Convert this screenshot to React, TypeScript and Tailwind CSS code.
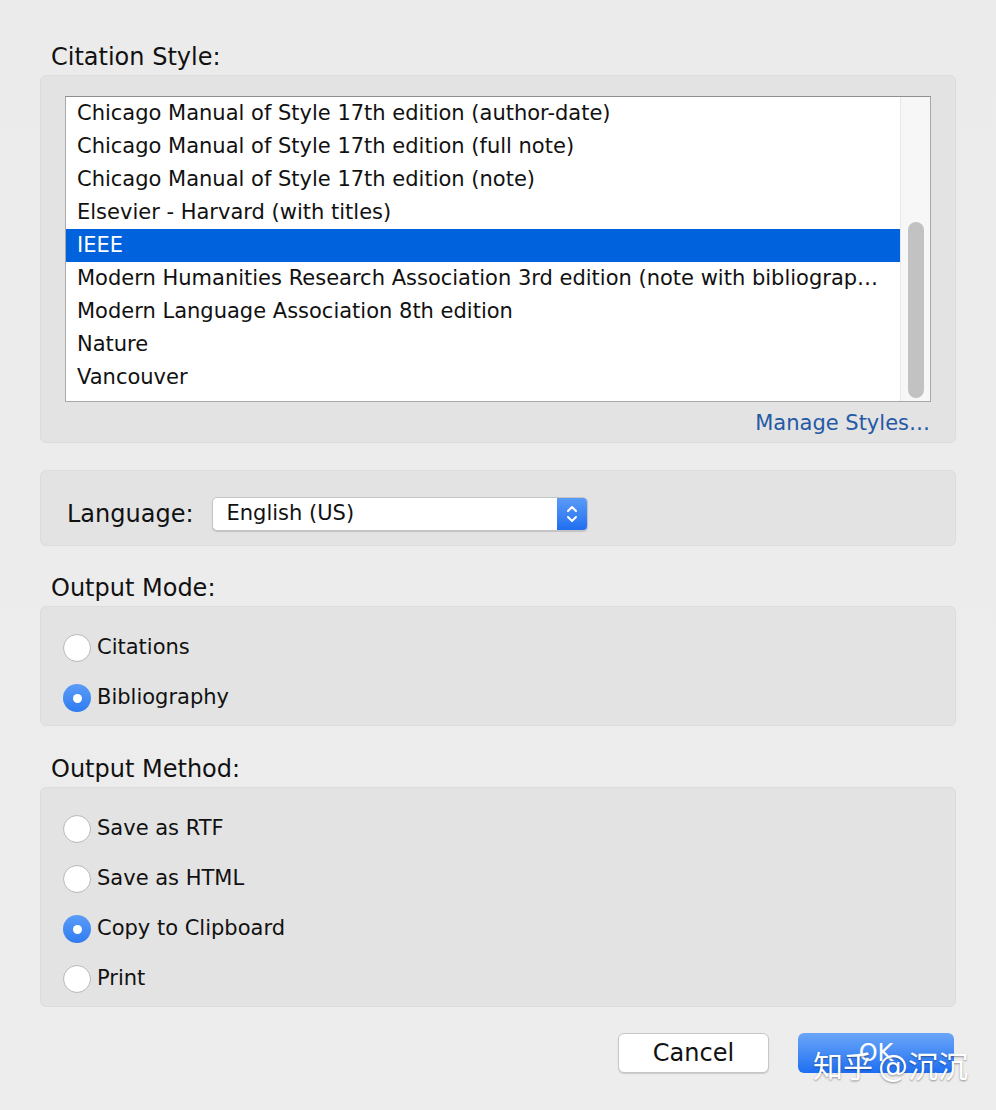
import React from 'react';

const styles = [
  'Chicago Manual of Style 17th edition (author-date)',
  'Chicago Manual of Style 17th edition (full note)',
  'Chicago Manual of Style 17th edition (note)',
  'Elsevier - Harvard (with titles)',
  'IEEE',
  'Modern Humanities Research Association 3rd edition (note with bibliography)',
  'Modern Language Association 8th edition',
  'Nature',
  'Vancouver',
];

const Radio: React.FC<{ label: string; checked?: boolean }> = ({ label, checked }) => (
  <div className="flex items-center h-[28px] gap-[6px]">
    {checked ? (
      <div className="w-[28px] h-[28px] rounded-full bg-gradient-to-b from-[#5a9cf7] to-[#2f7bf0] flex items-center justify-center">
        <div className="w-[9px] h-[9px] rounded-full bg-white" />
      </div>
    ) : (
      <div className="w-[28px] h-[28px] rounded-full bg-white border border-[#b8b8b8]" />
    )}
    <span>{label}</span>
  </div>
);

const SectionLabel: React.FC<{ children: React.ReactNode }> = ({ children }) => (
  <div className="h-[36px] flex items-center pl-[11px] text-[24px] text-[#111]">{children}</div>
);

const Panel: React.FC<{ className?: string; children: React.ReactNode }> = ({ className = '', children }) => (
  <div className={`rounded-[6px] bg-[#e3e3e3] border border-[#dcdcdc] ${className}`}>{children}</div>
);

const App: React.FC = () => {
  return (
    <div
      className="w-[996px] h-[1110px] bg-gradient-to-b from-[#ebebeb] to-[#ededed] text-[#111] text-[21px] px-[40px] pt-[39px]"
      style={{ fontFamily: '"DejaVu Sans", "Noto Sans CJK SC", sans-serif' }}
    >
      <SectionLabel>Citation Style:</SectionLabel>
      <Panel className="h-[368px] pt-[20px] px-[24px]">
        <div className="flex h-[306px] bg-white border border-[#a8a8a8] border-t-[#8f8f8f]">
          <div className="flex-1 min-w-0">
            {styles.map((s, i) => (
              <div
                key={s}
                className={`h-[33px] leading-[33px] px-[11px] truncate ${i === 4 ? 'bg-[#0062dd] text-white' : ''}`}
              >
                {s}
              </div>
            ))}
          </div>
          <div className="w-[30px] bg-[#f7f7f7] border-l border-[#e6e6e6] flex flex-col justify-end items-center pb-[3px]">
            <div className="w-[16px] h-[176px] rounded-full bg-[#c2c2c2]" />
          </div>
        </div>
        <div className="h-[44px] flex items-center justify-end pr-[1px] text-[#2559a6]">Manage Styles…</div>
      </Panel>

      <Panel className="mt-[27px] h-[76px] flex items-center pl-[26px] pt-[12px] gap-[18px]">
        <span className="text-[24px]">Language:</span>
        <div className="w-[376px] h-[34px] flex rounded-[5px] bg-white border border-[#c4c4c4] shadow-[0_1px_1px_rgba(0,0,0,0.15)] overflow-hidden">
          <div className="flex-1 flex items-center pl-[14px]">English (US)</div>
          <div className="w-[30px] bg-gradient-to-b from-[#5b9bf7] to-[#1f6ef0] flex items-center justify-center">
            <svg width="12" height="20" viewBox="0 0 12 20" fill="none" stroke="white" strokeWidth="2" strokeLinecap="round" strokeLinejoin="round">
              <path d="M2 7 L6 3 L10 7" />
              <path d="M2 13 L6 17 L10 13" />
            </svg>
          </div>
        </div>
      </Panel>

      <div className="mt-[24px]">
        <SectionLabel>Output Mode:</SectionLabel>
      </div>
      <Panel className="h-[120px] pl-[22px] pt-[27px] flex flex-col gap-[22px]">
        <Radio label="Citations" />
        <Radio label="Bibliography" checked />
      </Panel>

      <div className="mt-[25px]">
        <SectionLabel>Output Method:</SectionLabel>
      </div>
      <Panel className="h-[220px] pl-[22px] pt-[27px] flex flex-col gap-[22px]">
        <Radio label="Save as RTF" />
        <Radio label="Save as HTML" />
        <Radio label="Copy to Clipboard" checked />
        <Radio label="Print" />
      </Panel>

      <div className="mt-[26px] flex justify-end gap-[29px] pr-[2px] relative">
        <button className="w-[151px] h-[40px] rounded-[6px] bg-white border border-[#c6c6c6] shadow-[0_1px_1px_rgba(0,0,0,0.15)] text-[24px] text-[#111]">
          Cancel
        </button>
        <button className="w-[156px] h-[40px] rounded-[6px] bg-gradient-to-b from-[#6aa6f8] to-[#1b6ef2] text-[24px] text-white">
          OK
        </button>
        <div
          className="absolute right-[-12px] top-[11px] flex items-center gap-[5px] text-[30px] text-white"
          style={{ textShadow: '0 1px 2px rgba(0,0,0,0.4)' }}
        >
          <span>知乎</span>
          <span>@沉沉</span>
        </div>
      </div>
    </div>
  );
};

export default App;
